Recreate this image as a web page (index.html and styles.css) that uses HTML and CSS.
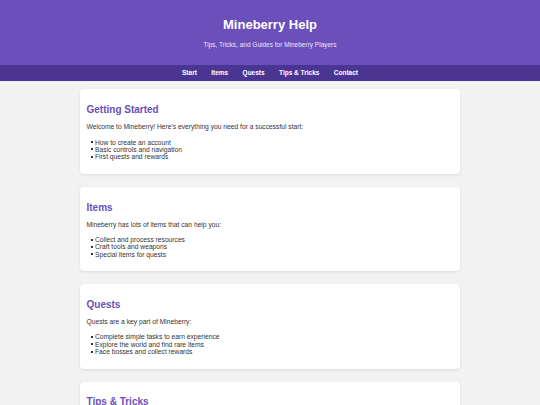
FILE: index.html
```html
<!DOCTYPE html>
<html lang="en">
<head>
<meta charset="utf-8">
<title>Mineberry Help</title>
<link rel="stylesheet" href="styles.css">
</head>
<body>
<header class="site-header">
  <h1 class="site-title">Mineberry Help</h1>
  <p class="site-tagline">Tips, Tricks, and Guides for Mineberry Players</p>
</header>
<nav class="site-nav">
  <a href="#start">Start</a>
  <a href="#items">Items</a>
  <a href="#quests">Quests</a>
  <a href="#tips">Tips &amp; Tricks</a>
  <a href="#contact">Contact</a>
</nav>
<main class="content">
  <section class="card" id="start">
    <h2>Getting Started</h2>
    <p>Welcome to Mineberry! Here's everything you need for a successful start:</p>
    <ul>
      <li>How to create an account</li>
      <li>Basic controls and navigation</li>
      <li>First quests and rewards</li>
    </ul>
  </section>
  <section class="card" id="items">
    <h2>Items</h2>
    <p>Mineberry has lots of items that can help you:</p>
    <ul>
      <li>Collect and process resources</li>
      <li>Craft tools and weapons</li>
      <li>Special items for quests</li>
    </ul>
  </section>
  <section class="card" id="quests">
    <h2>Quests</h2>
    <p>Quests are a key part of Mineberry:</p>
    <ul>
      <li>Complete simple tasks to earn experience</li>
      <li>Explore the world and find rare items</li>
      <li>Face bosses and collect rewards</li>
    </ul>
  </section>
  <section class="card" id="tips">
    <h2>Tips &amp; Tricks</h2>
    <p>Useful tips to become a better player:</p>
    <ul>
      <li>Save your progress regularly</li>
      <li>Trade with other players</li>
      <li>Join a guild for group quests</li>
    </ul>
  </section>
  <section class="card" id="contact">
    <h2>Contact</h2>
    <p>Questions? Reach out to the Mineberry support team.</p>
  </section>
</main>
</body>
</html>
```

FILE: styles.css
```css
html, body {
  margin: 0;
  padding: 0;
}
body {
  background: #f2f2f2;
  color: #333333;
  font-family: "Liberation Sans", Arial, sans-serif;
  font-size: 6.7px;
  line-height: 7.4px;
}
.site-header {
  background: #6b4fbb;
  color: #ffffff;
  text-align: center;
  padding: 8.5px 10px 10px;
}
.site-title {
  font-size: 13px;
  line-height: 15px;
  font-weight: bold;
  margin: 8.7px 0;
}
.site-tagline {
  font-size: 6.5px;
  line-height: 7.5px;
  margin: 6.5px 0;
  color: #ece6fa;
}
.site-nav {
  background: #4b3592;
  display: flex;
  justify-content: center;
  gap: 14.4px;
  height: 16px;
  align-items: center;
}
.site-nav a {
  color: #ffffff;
  text-decoration: none;
  font-weight: bold;
  font-size: 6.5px;
}
.content {
  width: 380px;
  margin: 0 auto;
  padding-top: 8.5px;
}
.card {
  background: #ffffff;
  border-radius: 4px;
  box-shadow: 0 1px 3px rgba(0, 0, 0, 0.1);
  padding: 6.5px;
  margin-bottom: 13px;
}
.card h2 {
  color: #6b4fbb;
  font-size: 10px;
  line-height: 11.5px;
  font-weight: bold;
  margin: 8.3px 0 7.5px;
}
.card p {
  margin: 0 0 8px;
}
.card ul {
  list-style: none;
  margin: 8px 0 6.5px;
  padding-left: 8.5px;
}
.card li::before {
  content: "";
  display: inline-block;
  width: 2px;
  height: 2px;
  background: #333333;
  margin-left: -4.4px;
  margin-right: 2.4px;
  vertical-align: 1.5px;
}
```
